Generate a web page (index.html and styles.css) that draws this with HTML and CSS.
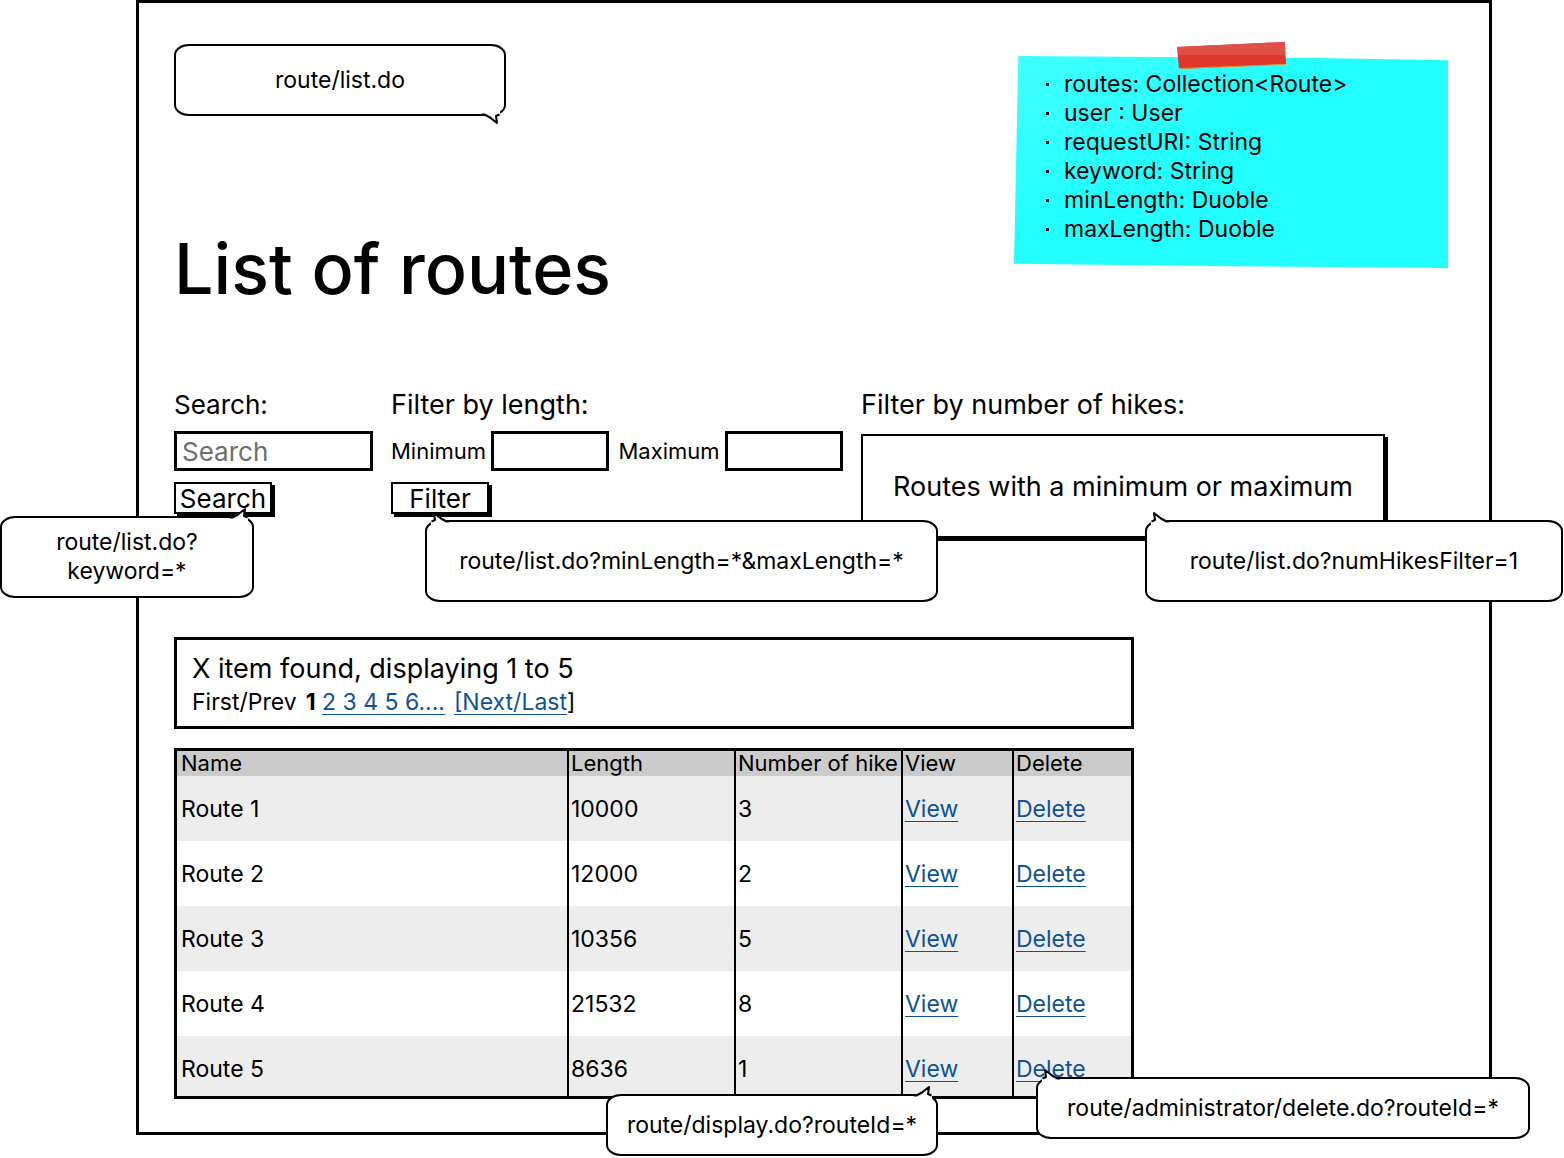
FILE: index.html
```html
<!DOCTYPE html>
<html lang="en">
<head>
<meta charset="utf-8">
<title>List of routes</title>
<link rel="stylesheet" href="styles.css">
</head>
<body>
<svg class="defs" aria-hidden="true">
  <symbol id="tail" viewBox="0 0 18 16">
    <path d="M2 16V12L15 4L14 11L18 13V16Z" fill="#fff"/>
    <path d="M0 12.500H2.500L8 9.500L15 4L14 11L17.500 12.500" fill="none" stroke="#000" stroke-width="2" stroke-linejoin="round"/>
  </symbol>
</svg>
<main class="frame">
  <header class="top">
    <div class="intro">
      <p class="callout callout-page">route/list.do<svg class="tail"><use href="#tail"/></svg></p>
      <h1>List of routes</h1>
    </div>
    <aside class="note">
      <svg class="tape" viewBox="0 0 109 28" aria-hidden="true">
        <path d="M0 5L108 0L109 22L2 27Z" fill="#e0372c"/>
        <path d="M0 5L108 0V13L1 13Z" fill="#de5048"/>
        <path d="M2 26.500L108 22.500" stroke="#f08a28"/>
      </svg>
      <ul>
        <li>routes: Collection&lt;Route&gt;</li>
        <li>user : User</li>
        <li>requestURI: String</li>
        <li>keyword: String</li>
        <li>minLength: Duoble</li>
        <li>maxLength: Duoble</li>
      </ul>
    </aside>
  </header>

  <section class="filters">
    <form class="filter">
      <label class="title" for="q">Search:</label>
      <input class="box" id="q" type="text" placeholder="Search">
      <div class="anchor">
        <button class="btn" type="button">Search</button>
        <p class="callout callout-search">route/list.do?<br>keyword=*<svg class="tail"><use href="#tail"/></svg></p>
      </div>
    </form>
    <form class="filter">
      <h2 class="title">Filter by length:</h2>
      <div class="range">
        <label for="min">Minimum</label><input class="box" id="min" type="text">
        <label for="max">Maximum</label><input class="box" id="max" type="text">
      </div>
      <div class="anchor">
        <button class="btn" type="button">Filter</button>
        <p class="callout callout-length">route/list.do?minLength=*&amp;maxLength=*<svg class="tail tail-left"><use href="#tail"/></svg></p>
      </div>
    </form>
    <div class="filter filter-hikes">
      <h2 class="title">Filter by number of hikes:</h2>
      <div class="anchor">
        <button class="btn btn-large" type="button">Routes with a minimum or maximum</button>
        <p class="callout callout-hikes">route/list.do?numHikesFilter=1<svg class="tail tail-left"><use href="#tail"/></svg></p>
      </div>
    </div>
  </section>

  <nav class="pager">
    <p class="found">X item found, displaying 1 to 5</p>
    <p class="pages"><span>First/Prev</span> <span><b>1</b> <a href="#pages">2 3 4 5 6....</a></span> <span><a href="#next">[Next/Last</a>]</span></p>
  </nav>

  <table class="routes">
    <colgroup><col class="c-name"><col class="c-num"><col class="c-num"><col class="c-view"><col></colgroup>
    <thead>
      <tr><th>Name</th><th>Length</th><th>Number of hike</th><th>View</th><th>Delete</th></tr>
    </thead>
    <tbody>
      <tr><td>Route 1</td><td>10000</td><td>3</td><td><a href="#view1">View</a></td><td><a href="#del1">Delete</a></td></tr>
      <tr><td>Route 2</td><td>12000</td><td>2</td><td><a href="#view2">View</a></td><td><a href="#del2">Delete</a></td></tr>
      <tr><td>Route 3</td><td>10356</td><td>5</td><td><a href="#view3">View</a></td><td><a href="#del3">Delete</a></td></tr>
      <tr><td>Route 4</td><td>21532</td><td>8</td><td><a href="#view4">View</a></td><td><a href="#del4">Delete</a></td></tr>
      <tr><td>Route 5</td><td>8636</td><td>1</td>
        <td><a href="#view5">View</a><p class="callout callout-view">route/display.do?routeId=*<svg class="tail"><use href="#tail"/></svg></p></td>
        <td><a href="#del5">Delete</a><p class="callout callout-delete">route/administrator/delete.do?routeId=*<svg class="tail tail-left"><use href="#tail"/></svg></p></td></tr>
    </tbody>
  </table>
</main>
</body>
</html>
```
FILE: styles.css
```css
* { box-sizing: border-box; }

body {
  margin: 0;
  background: #fff;
  color: #000;
  font: 23px/29px Inter, "Liberation Sans", sans-serif;
}

h1, h2, p, ul { margin: 0; padding: 0; }
a { color: #0f5196; text-underline-offset: 4px; text-decoration-thickness: 1px; }
.defs { position: absolute; width: 0; height: 0; }

.frame {
  margin: 0 72px 23px 136px;
  padding: 41px 41px 33px 35px;
  border: 3px solid #000;
}

/* Header */
.top { display: flex; justify-content: space-between; align-items: flex-start; margin-bottom: 81px; }
h1 { margin-top: 113px; font-size: 70px; line-height: 80px; font-weight: 500; }

.note {
  position: relative;
  width: 434px;
  margin-top: 12px;
  padding: 14px 20px 24px 32px;
}
.note::before {
  content: "";
  position: absolute;
  inset: 0;
  z-index: -1;
  background: linear-gradient(150deg, #42ffff, #23ffff 40%);
  clip-path: polygon(1% 0, 70% 1%, 100% 2%, 100% 100%, 45% 99%, 0 98%);
}
.note ul { list-style: none; }
.note li { display: flex; align-items: center; gap: 15px; }
.note li::before { content: ""; width: 3px; height: 3px; background: #000; }
.tape { position: absolute; left: 163px; top: -14px; width: 109px; height: 28px; }

/* Speech balloons */
.callout {
  position: absolute;
  z-index: 1;
  display: flex;
  align-items: center;
  justify-content: center;
  border: 2px solid #000;
  border-radius: 15px / 11px;
  background: #fff;
  text-align: center;
  white-space: nowrap;
}
.tail { position: absolute; right: 4px; top: -13px; width: 18px; height: 16px; }
.tail-left { right: auto; left: 4px; transform: scaleX(-1); }
.callout-page { position: relative; width: 332px; height: 72px; }
.callout-page .tail { top: auto; bottom: -13px; transform: scaleY(-1); }
.callout-search { left: -174px; top: 34px; width: 254px; height: 82px; }
.callout-length { left: 34px; top: 38px; width: 513px; height: 82px; }
.callout-hikes { right: -178px; top: 86px; width: 418px; height: 82px; }
.callout-view { right: 74px; top: 58px; width: 332px; height: 62px; }
.callout-delete { left: 22px; top: 41px; width: 494px; height: 62px; }

/* Filters */
.filters {
  display: grid;
  grid-template-columns: 199px 452px minmax(0, 524px);
  gap: 18px;
  align-items: start;
  margin-bottom: 99px;
}
.filter { display: flex; flex-direction: column; gap: 11px; }
.filter-hikes { gap: 14px; }
.title { font-size: 26px; line-height: 30px; font-weight: 400; }
h2.title { font-size: 27px; }
.box {
  width: 100%;
  min-width: 0;
  height: 40px;
  padding: 0 5px;
  border: 3px solid #000;
  background: #fff;
  font: inherit;
  font-size: 26px;
}
.box::placeholder { color: #6e6e6e; opacity: 1; }
.range { display: flex; align-items: center; gap: 5px; font-size: 22px; }
.range .box { flex: 1; }
.range .box + label { margin-left: 4px; }
.anchor { position: relative; align-self: flex-start; display: flex; }
.filter-hikes .anchor { align-self: stretch; }
.btn {
  width: 98px;
  height: 32px;
  padding: 0;
  border: 2px solid #000;
  background: #fff;
  box-shadow: 3px 3px 0 #000;
  color: #000;
  font: inherit;
  font-size: 26px;
  white-space: nowrap;
}
.btn-large { width: 100%; height: 104px; font-size: 27px; }

/* Results */
.pager { max-width: 960px; height: 92px; padding: 13px 15px; border: 3px solid #000; margin-bottom: 19px; }
.found { font-size: 27px; line-height: 32px; }
.pages { display: flex; gap: 9px; line-height: 34px; }

.routes {
  width: 100%;
  max-width: 960px;
  table-layout: fixed;
  border-collapse: separate;
  border-spacing: 0;
  border: 3px solid #000;
}
.c-name { width: 390px; }
.c-num { width: 167px; }
.c-view { width: 111px; }
.routes th, .routes td { padding: 0 0 0 4px; text-align: left; font-weight: 400; white-space: nowrap; }
.routes th + th, .routes td + td { border-left: 2px solid #000; padding-left: 2px; }
.routes th { height: 25px; font-size: 22px; line-height: 25px; background: #cbcbcb; }
.routes td { position: relative; height: 65px; padding-top: 2px; }
.routes tr:nth-child(odd) td { background: #ededed; }
.routes tr:last-child td { height: 60px; padding-top: 6px; }
```
